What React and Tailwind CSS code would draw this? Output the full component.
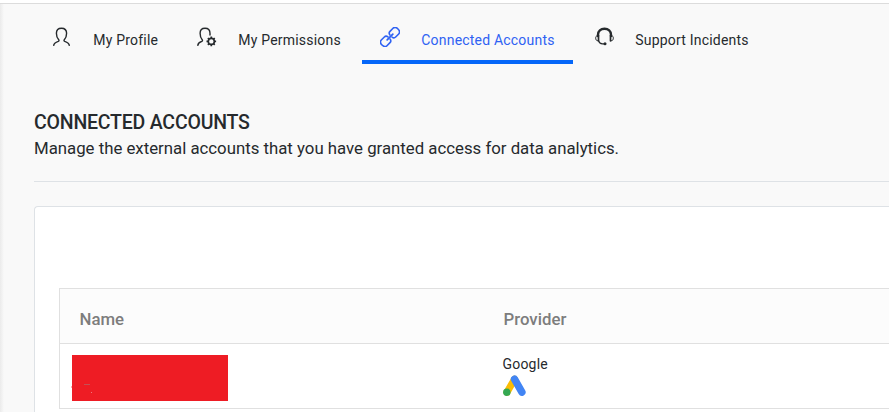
const stroke = {
  fill: "none",
  stroke: "currentColor",
  strokeLinecap: "round",
  strokeLinejoin: "round",
};

function ProfileIcon() {
  return (
    <svg width="20" height="20" viewBox="0 0 20 20" {...stroke} strokeWidth="1.4">
      <path d="M1.700 18.400c.2-2.400 2.200-3.200 4.600-4 .8-.3.9-1 .4-1.600C5.200 11.200 4.400 9.200 4.400 6.300 4.400 3.200 6.400 1.300 9.500 1.300s5.100 1.900 5.100 5c0 2.900-.8 4.900-2.300 6.500-.5.6-.4 1.300.4 1.600 2.400.8 4.400 1.600 4.600 4" />
    </svg>
  );
}

function PermissionsIcon() {
  return (
    <svg width="20" height="20" viewBox="0 0 20 20" {...stroke} strokeWidth="1.4">
      <path d="M.8 18.400c.2-2.400 1.600-3.200 4-4 .8-.3.9-1 .4-1.600C3.800 11.200 3.100 9.200 3.100 6.300 3.100 3.200 5 1.300 8 1.300s5 1.900 5 5v1.700" />
      <circle cx="14.300" cy="14.400" r="3" strokeWidth="1.600" />
      <path strokeWidth="1.700" strokeLinecap="butt" d="M14.300 11.400V9.600M14.300 17.400v1.800M11.300 14.400H9.500M17.300 14.400h1.800M12.200 12.300l-1.300-1.300M16.400 16.500l1.300 1.300M12.200 16.500l-1.300 1.300M16.400 12.300l1.300-1.300" />
    </svg>
  );
}

function LinkIcon() {
  return (
    <svg width="20" height="20" viewBox="0 0 20 20" {...stroke} strokeWidth="1.600">
      <g transform="rotate(-45 10 10)">
        <path d="M8.600 11.500c-.2 1.500-1.100 2.500-2.600 2.500H1.700C-.1 14-1.300 12.400-1.300 10s1.200-4 3-4H6c1.500 0 2.400 1 2.600 2.500" />
        <path d="M11.400 8.500C11.600 7 12.500 6 14 6h4.300c1.800 0 3 1.600 3 4s-1.200 4-3 4H14c-1.500 0-2.400-1-2.600-2.500" />
        <path d="M6 10h8" strokeWidth="1.800" />
      </g>
    </svg>
  );
}

function HeadsetIcon() {
  return (
    <svg className="ml-px" width="20" height="20" viewBox="0 0 20 20" {...stroke}>
      <path d="M3 9V7.800C3 4 5.700 1.800 9.500 1.800S16 4 16 7.800V9" strokeWidth="2.400" />
      <path d="M3.500 8.500v5.300M15.500 8.500v5.300" strokeWidth="1.700" />
      <path d="M2.600 8.500C1 8.800.7 9.800.7 11.200s.4 2.300 1.900 2.600M16.400 8.500c1.600.3 1.900 1.300 1.900 2.700s-.4 2.300-1.900 2.600" strokeWidth="1" />
      <path d="M3.700 13.800c.4 1.900 1.700 2.900 3.800 3h2" strokeWidth="1.200" />
      <circle cx="10" cy="16.800" r="1.500" fill="currentColor" stroke="none" />
    </svg>
  );
}

function AdsLogo() {
  return (
    <svg className="mt-px block" width="24" height="22" viewBox="0 0 24 22" fill="none" strokeLinecap="round">
      <path d="M4 17.200 11.500 4.200" stroke="#fbbc04" strokeWidth="7" />
      <path d="M11.500 4.200 18.900 17.200" stroke="#4285f4" strokeWidth="7.400" />
      <circle cx="3.800" cy="17.300" r="3.700" fill="#34a853" />
    </svg>
  );
}

const tabs = [
  { label: "My Profile", Icon: ProfileIcon, width: "w-[142px]" },
  { label: "My Permissions", Icon: PermissionsIcon, width: "w-[180px]" },
  { label: "Connected Accounts", Icon: LinkIcon, width: "w-[211px]", active: true },
  { label: "Support Incidents", Icon: HeadsetIcon, width: "w-[190px]" },
];

export default function App() {
  return (
    <div className="flex h-[412px] w-[889px] flex-col overflow-hidden bg-white pt-[3px] font-[Roboto,sans-serif] text-[#262a2d]">
      <div className="flex flex-1 border-t border-[#dcdcdc] bg-[#f9f9f9]">
        <div className="w-1 shrink-0 bg-linear-to-r from-[#ebebeb] to-[#f9f9f9]" />
        <main className="min-w-0 flex-1 pl-[30px]">
          <nav className="flex h-[60px] gap-[3px]">
            {tabs.map(({ label, Icon, width, active }) => (
              <a
                key={label}
                className={`${width} flex shrink-0 border-b-4 pl-[18px] ${active ? "border-[#0567f9] text-[#2f62f3]" : "border-transparent"}`}
              >
                <span className="mt-[23px] h-5 w-[41.300px] shrink-0"><Icon /></span>
                <span className="mt-[26px] text-[14px] leading-5 tracking-[0.200px] whitespace-nowrap">{label}</span>
              </a>
            ))}
          </nav>
          <header className="h-[118px] border-b border-[#dee2e6] pt-[46px]">
            <h1 className="text-[19.500px] leading-[25px] font-medium tracking-[-0.200px] whitespace-nowrap">CONNECTED ACCOUNTS</h1>
            <p className="mt-px text-[16.800px] leading-6 whitespace-nowrap">Manage the external accounts that you have granted access for data analytics.</p>
          </header>
          <section className="mt-6 h-[240px] rounded-tl-[4px] border-t border-l border-[#dee2e6] bg-white pt-[81px] pl-6">
            <div className="border-t border-l border-[#e0e0e0]">
              <div className="flex h-[55px] border-b border-[#e0e0e0] bg-[#fcfcfc] pl-[19.500px] text-[16.800px] leading-6 font-medium text-[#7d7d7d]">
                <div className="w-[424px] pt-[18px]">Name</div>
                <div className="pt-[18px]">Provider</div>
              </div>
              <div className="flex h-[65px] border-b border-[#e0e0e0] pl-3">
                <div className="w-[430.500px] pt-[11px]">
                  <div className="flex h-[46px] w-[156px] bg-[#ee1c24] pt-[29px]">
                    <div className="mt-[2px] -ml-px h-[2px] w-px bg-[#f7b5b8]" />
                    <div className="ml-3 h-px w-[6px] bg-[#c45055]" />
                    <div className="mt-2 ml-px h-px w-px bg-[#f0777b]" />
                  </div>
                </div>
                <div className="pt-[10px]">
                  <div className="text-[14px] leading-5 tracking-[0.200px]">Google</div>
                  <AdsLogo />
                </div>
              </div>
            </div>
          </section>
        </main>
      </div>
    </div>
  );
}
